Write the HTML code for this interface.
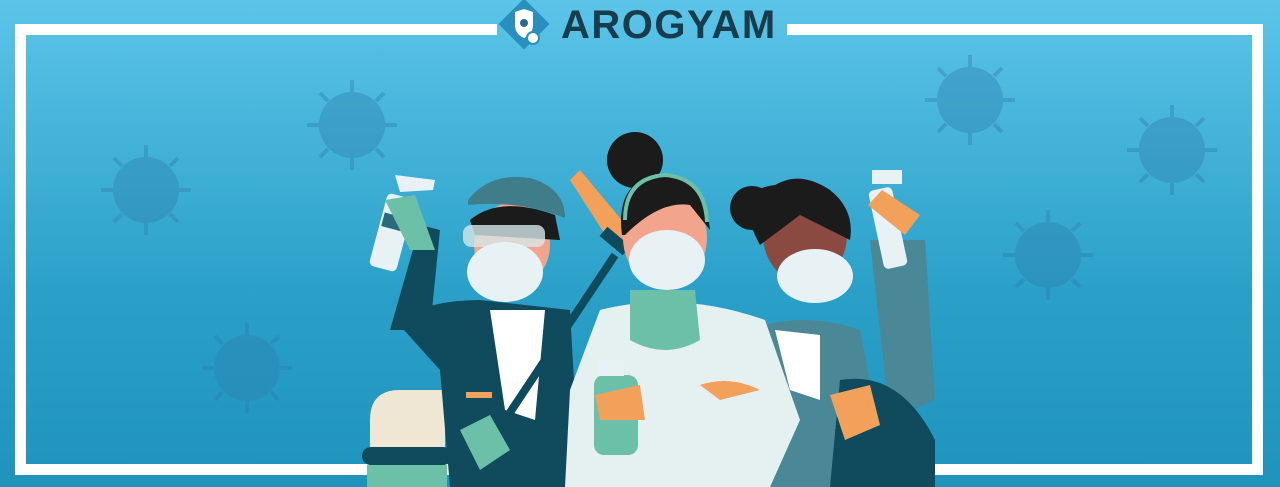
<!DOCTYPE html>
<html><head><meta charset="utf-8"><style>
html,body{margin:0;padding:0}
body{width:1280px;height:487px;overflow:hidden;background:linear-gradient(#5cc4e9,#2aa0c8 60%,#1f93bb)}
svg{position:absolute;left:0;top:0}
.logo{position:absolute;left:497px;top:0;width:290px;height:52px}
.logo span{position:absolute;left:64px;top:3px;font:900 40px "Liberation Sans",sans-serif;color:#173c4c;letter-spacing:1.5px}
</style></head><body>
<svg width="1280" height="487" viewBox="0 0 1280 487">
<defs>
<g id="v"><circle r="33" fill="#2e7fae" opacity=".4"/>
<g stroke="#2e7fae" stroke-width="4" opacity=".4"><line x1="0" y1="-33" x2="0" y2="-45"/><line x1="0" y1="33" x2="0" y2="45"/><line x1="-33" y1="0" x2="-45" y2="0"/><line x1="33" y1="0" x2="45" y2="0"/><line x1="24" y1="24" x2="32" y2="32"/><line x1="-24" y1="24" x2="-32" y2="32"/><line x1="24" y1="-24" x2="32" y2="-32"/><line x1="-24" y1="-24" x2="-32" y2="-32"/></g></g>
</defs>
<use href="#v" x="352" y="125"/><use href="#v" x="146" y="190"/><use href="#v" x="970" y="100"/>
<use href="#v" x="1172" y="150"/><use href="#v" x="1048" y="255"/><use href="#v" x="247" y="368"/>
<path d="M497 29.5 L20.5 29.5 L20.5 469.5 L1257.5 469.5 L1257.5 29.5 L787 29.5" fill="none" stroke="#fff" stroke-width="11"/>
<!-- bucket -->
<path d="M370 420 Q370 390 400 390 L445 390 L445 455 L370 455Z" fill="#efe6d4"/>
<rect x="362" y="447" width="90" height="18" rx="9" fill="#0f4a5d"/>
<rect x="367" y="465" width="80" height="22" fill="#6cc0a8"/>
<!-- right woman -->
<path d="M870 240 L925 240 L935 400 L890 420 L880 330Z" fill="#4a8797"/>
<path d="M750 330 Q800 310 860 330 L890 487 L730 487Z" fill="#4a8797"/>
<path d="M775 330 L820 335 L820 400 L790 390Z" fill="#fff"/>
<ellipse cx="805" cy="235" rx="42" ry="48" fill="#8b4a41"/>
<path d="M760 245 Q730 190 775 185 Q800 170 830 190 Q855 210 850 240 L800 215Z" fill="#1b1b1b"/>
<circle cx="752" cy="208" r="22" fill="#1b1b1b"/>
<ellipse cx="815" cy="276" rx="38" ry="27" fill="#e8f1f4"/>
<path d="M840 380 Q900 370 935 440 L935 487 L830 487Z" fill="#0f4a5d"/>
<path d="M830 395 L870 385 L880 425 L845 440Z" fill="#f2a05a"/>
<rect x="876" y="188" width="24" height="80" rx="5" fill="#e8f1f4" transform="rotate(-12 888 228)"/>
<rect x="872" y="170" width="30" height="14" fill="#e8f1f4"/>
<path d="M868 205 L882 190 L920 215 L905 235Z" fill="#f2a05a"/>
<!-- left man -->
<path d="M390 330 L420 225 L440 230 L430 330Z" fill="#0f4a5d"/>
<path d="M395 320 Q430 300 480 300 L570 310 L580 487 L450 487 L440 370Z" fill="#0f4a5d"/>
<path d="M490 310 L545 310 L535 420 L505 410Z" fill="#fff"/>
<rect x="466" y="392" width="26" height="6" fill="#f2a05a"/>
<ellipse cx="512" cy="245" rx="38" ry="42" fill="#f2a58c"/>
<path d="M470 220 Q500 195 555 215 L560 240 L475 235Z" fill="#1b1b1b"/>
<path d="M468 200 Q490 172 530 178 Q565 188 565 218 Q520 200 468 205Z" fill="#3f7d8a"/>
<rect x="463" y="225" width="82" height="22" rx="8" fill="#d6e7ea" opacity=".8"/>
<ellipse cx="505" cy="272" rx="38" ry="30" fill="#e8f1f4"/>
<line x1="465" y1="480" x2="615" y2="255" stroke="#0f4a5d" stroke-width="8"/>
<path d="M570 180 L580 170 L630 230 L615 250Z" fill="#f2a05a"/>
<rect x="600" y="235" width="30" height="12" fill="#0f4a5d" transform="rotate(40 615 241)"/>
<path d="M460 430 L490 415 L510 450 L480 470Z" fill="#6cc0a8"/>
<rect x="378" y="195" width="28" height="75" rx="5" fill="#e8f1f4" transform="rotate(15 392 232)"/>
<rect x="380" y="215" width="28" height="14" fill="#2a6a7d" transform="rotate(15 392 232)"/>
<path d="M395 175 L435 180 L433 190 L400 192Z" fill="#e8f1f4"/>
<path d="M385 200 L415 195 L435 250 L410 250Z" fill="#6cc0a8"/>
<!-- center woman -->
<path d="M600 310 Q680 290 765 320 L800 420 L770 487 L565 487 L570 390Z" fill="#e5f0f0"/>
<path d="M630 290 L695 290 L700 340 Q665 360 630 340Z" fill="#6cc0a8"/>
<ellipse cx="665" cy="238" rx="42" ry="48" fill="#f2a58c"/>
<path d="M622 235 Q615 180 660 175 Q705 178 710 230 L690 205 Q660 200 625 235Z" fill="#1b1b1b"/>
<circle cx="635" cy="160" r="28" fill="#1b1b1b"/>
<path d="M625 220 Q625 178 665 175 Q705 178 707 222" fill="none" stroke="#6cc0a8" stroke-width="4"/>
<ellipse cx="667" cy="260" rx="38" ry="30" fill="#e8f1f4"/>
<path d="M700 385 Q730 375 760 390 L720 400Z" fill="#f2a05a"/>
<rect x="594" y="375" width="44" height="80" rx="10" fill="#6cc0a8"/>
<rect x="598" y="360" width="26" height="16" fill="#e8f1f4"/>
<path d="M595 395 L640 385 L645 420 L600 420Z" fill="#f2a05a"/>
</svg>
<div class="logo">
<svg width="56" height="52" viewBox="0 0 56 52" style="left:0;top:0"><rect x="9" y="6" width="36" height="36" transform="rotate(45 27 24)" fill="#2a8fbf"/><path d="M18 12 L27 9 L36 12 L36 25 Q36 34 27 38 Q18 34 18 25Z" fill="#fff"/><circle cx="27" cy="23" r="4" fill="#2a6a8d"/><circle cx="36" cy="38" r="6" fill="#fff" stroke="#2a8fbf" stroke-width="2"/></svg>
<span>AROGYAM</span></div>
</body></html>
